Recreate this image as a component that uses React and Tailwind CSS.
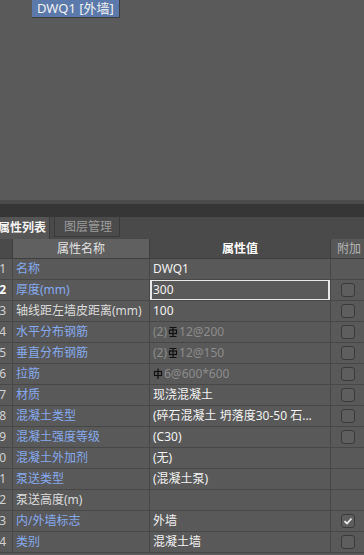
import React from 'react'

const BLUE = 'text-[#86aaee]'

// HRB400-ish rebar glyph
const Rebar3 = () => (
  <svg width="10" height="12" viewBox="0 0 10 12" className="inline-block mx-[1px]">
    <path d="M1.5 1.5H8.5M5 1.5V10.5M1.5 10.5H8.5" stroke="#111" strokeWidth="1.2" fill="none" />
    <rect x="1.5" y="4" width="7" height="3.5" stroke="#111" strokeWidth="1.2" fill="none" />
  </svg>
)

// HPB300-ish rebar glyph
const Rebar1 = () => (
  <svg width="10" height="12" viewBox="0 0 10 12" className="inline-block mr-[1px]">
    <path d="M5 0.5V11" stroke="#111" strokeWidth="1.2" fill="none" />
    <rect x="1.5" y="3.5" width="7" height="4" stroke="#111" strokeWidth="1.2" fill="none" />
  </svg>
)

const rows = [
  { n: 1, name: '名称', value: 'DWQ1', check: false },
  { n: 2, name: '厚度(mm)', value: '300', check: 'off', editing: true },
  { n: 3, name: '轴线距左墙皮距离(mm)', value: '100', check: 'off', plain: true },
  { n: 4, name: '水平分布钢筋', value: <><span>(2)</span><Rebar3 /><span>12@200</span></>, check: 'off', dim: true },
  { n: 5, name: '垂直分布钢筋', value: <><span>(2)</span><Rebar3 /><span>12@150</span></>, check: 'off', dim: true },
  { n: 6, name: '拉筋', value: <><Rebar1 /><span>6@600*600</span></>, check: 'off', dim: true },
  { n: 7, name: '材质', value: '现浇混凝土', check: 'off' },
  { n: 8, name: '混凝土类型', value: '(碎石混凝土 坍落度30-50 石...', check: 'off' },
  { n: 9, name: '混凝土强度等级', value: '(C30)', check: 'off' },
  { n: 10, name: '混凝土外加剂', value: '(无)', check: false },
  { n: 11, name: '泵送类型', value: '(混凝土泵)', check: false },
  { n: 12, name: '泵送高度(m)', value: '', check: false, plain: true },
  { n: 13, name: '内/外墙标志', value: '外墙', check: 'on' },
  { n: 14, name: '类别', value: '混凝土墙', check: 'off' },
]

const Checkbox = ({ on }) => (
  <div className="w-[14px] h-[14px] rounded-[3px] border border-[#3a3a3a] bg-[#5e5e5e] flex items-center justify-center">
    {on && (
      <svg width="10" height="10" viewBox="0 0 10 10">
        <path d="M1.5 5.2L4 7.5L8.5 2.5" stroke="#eeeeee" strokeWidth="1.8" fill="none" />
      </svg>
    )}
  </div>
)

const Row = ({ r }) => (
  <div className="flex h-[21px] border-b border-[#474747] bg-[#595959]">
    <div className={`w-[13px] shrink-0 border-r border-[#474747] flex justify-end items-center pr-[6px] overflow-hidden whitespace-nowrap ${r.editing ? 'text-white font-bold' : 'text-[#d2d2d2]'}`}>
      <span className="-mr-[6px] pr-[6px]">{r.n}</span>
    </div>
    <div className={`w-[137px] shrink-0 border-r border-[#474747] pl-[3px] flex items-center whitespace-nowrap overflow-hidden ${r.plain ? 'text-[#dcdcdc]' : BLUE}`}>
      {r.name}
    </div>
    <div className={`relative w-[181px] shrink-0 border-r border-[#474747] pl-[3px] flex items-center whitespace-nowrap overflow-hidden ${r.dim ? 'text-[#8c8c8c]' : 'text-[#f2f2f2]'}`}>
      {r.value}
      {r.editing && <div className="absolute -top-px left-0 right-0 -bottom-px border-2 border-[#e8e8e8]" />}
    </div>
    <div className="flex-1 flex items-center justify-center">
      {r.check && <Checkbox on={r.check === 'on'} />}
    </div>
  </div>
)

export default function App() {
  return (
    <div className="w-[364px] h-[555px] overflow-hidden bg-[#5a5a5a] text-[12px] leading-none font-['Noto_Sans','Noto_Sans_CJK_SC',sans-serif] flex flex-col">
      {/* canvas area */}
      <div className="h-[200px] shrink-0 pl-[32px]">
        <div className="inline-flex items-center h-[18px] px-[5px] bg-[#5b7aab] border-r border-b border-[#3e3e3e] text-[13px] text-[#f2f2f2]">
          DWQ1 [外墙]
        </div>
      </div>

      <div className="h-[4px] shrink-0 bg-[#4a4a4a]" />
      <div className="h-[13px] shrink-0 bg-[#363636]" />

      {/* tabs */}
      <div className="h-[22px] shrink-0 bg-[#4a4a4a] flex items-start">
        <div className="w-[50px] h-[22px] bg-[#555555] border-r border-[#3c3c3c] flex items-center justify-end pr-[3px] overflow-hidden whitespace-nowrap text-[#f4f4f4] font-bold">
          属性列表
        </div>
        <div className="ml-[4px] w-[66px] h-[20px] border border-[#3a3a3a] border-t-0 bg-[#4b4b4b] flex items-center pl-[9px] text-[#9c9c9c] whitespace-nowrap">
          图层管理
        </div>
      </div>

      {/* header */}
      <div className="flex h-[20px] shrink-0 border-b border-[#3e3e3e]">
        <div className="w-[13px] shrink-0 bg-[#4a4a4a] border-r border-[#3e3e3e]" />
        <div className="w-[137px] shrink-0 bg-[#606060] border-r border-[#3e3e3e] flex items-center justify-center text-[#e2e2e2]">
          属性名称
        </div>
        <div className="w-[181px] shrink-0 bg-[#4a4a4a] border-r border-[#3e3e3e] flex items-center justify-center text-white font-bold">
          属性值
        </div>
        <div className="flex-1 bg-[#575757] flex items-center pl-[6px] text-[#b4b4b4] whitespace-nowrap">
          附加
        </div>
      </div>

      {rows.map((r) => (
        <Row key={r.n} r={r} />
      ))}
      <div className="flex-1 bg-[#595959]" />
    </div>
  )
}
